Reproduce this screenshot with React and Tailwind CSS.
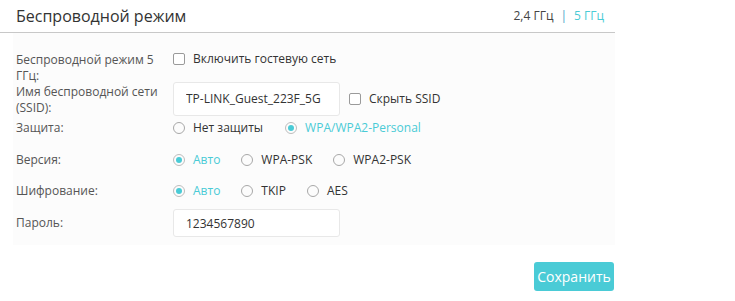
import React from 'react';

const TEAL = 'text-[#4acbd6]';

function Radio({ checked, label }) {
  return (
    <label className="flex items-center">
      <span
        className={
          'flex h-[12px] w-[12px] items-center justify-center rounded-full border ' +
          (checked ? 'border-[#bdbdbd]' : 'border-[#a8a8a8]')
        }
      >
        {checked && <span className="h-[6px] w-[6px] rounded-full bg-[#4acbd6]" />}
      </span>
      <span className={'ml-[8px] ' + (checked ? TEAL : 'text-[#333]')}>{label}</span>
    </label>
  );
}

function Checkbox({ label }) {
  return (
    <label className="flex items-center">
      <span className="h-[12px] w-[12px] rounded-[2px] border border-[#9a9a9a] bg-white" />
      <span className="ml-[8px] text-[#333]">{label}</span>
    </label>
  );
}

function Row({ label, className, labelClass = '', children }) {
  return (
    <div className={'flex ' + className}>
      <div className={'w-[157px] shrink-0 pr-[8px] leading-[16px] text-[#555] ' + labelClass}>{label}</div>
      <div className="flex items-center">{children}</div>
    </div>
  );
}

export default function App() {
  return (
    <div className="h-[301px] w-[735px] bg-white font-['Open_Sans',sans-serif] text-[12px]">
      <div className="w-[615px]">
        {/* Header */}
        <div className="flex h-[33px] items-center justify-between border-b border-[#c8c8c8] pl-[16px] pr-[11px]">
          <h2 className="text-[16px] text-[#333]">Беспроводной режим</h2>
          <div className="flex items-center text-[12px]">
            <span className="text-[#444]">2,4 ГГц</span>
            <span className="mx-[7px] text-[#4aa6c8]">|</span>
            <span className={TEAL}>5 ГГц</span>
          </div>
        </div>

        {/* Form */}
        <div className="ml-[13px] bg-[#fcfcfc] pl-[3px] pt-[19px] pb-[8px]">
          <Row label={<>Беспроводной режим 5<br />ГГц:</>} className="h-[29px]">
            <div className="-mt-[16px]">
              <Checkbox label="Включить гостевую сеть" />
            </div>
          </Row>

          <Row
            label={<>Имя беспроводной сети<br />(SSID):</>}
            labelClass="self-start pt-[3px]"
            className="items-center"
          >
            <input
              readOnly
              value="TP-LINK_Guest_223F_5G"
              className="h-[34px] w-[167px] rounded-[3px] border border-[#e8e8e8] bg-white px-[12px] text-[12px] text-[#333] outline-none"
            />
            <div className="ml-[9px]">
              <Checkbox label="Скрыть SSID" />
            </div>
          </Row>

          <Row label="Защита:" className="mt-[4px] h-[16px] items-center">
            <div className="flex gap-[22px]">
              <Radio label="Нет защиты" />
              <Radio checked label="WPA/WPA2-Personal" />
            </div>
          </Row>

          <Row label="Версия:" className="mt-[16px] h-[16px] items-center">
            <div className="flex gap-[21px]">
              <Radio checked label="Авто" />
              <Radio label="WPA-PSK" />
              <Radio label="WPA2-PSK" />
            </div>
          </Row>

          <Row label="Шифрование:" className="mt-[15px] h-[16px] items-center">
            <div className="flex gap-[21px]">
              <Radio checked label="Авто" />
              <Radio label="TKIP" />
              <Radio label="AES" />
            </div>
          </Row>

          <Row label="Пароль:" className="mt-[10px] items-center">
            <input
              readOnly
              value="1234567890"
              className="h-[28px] w-[167px] rounded-[3px] border border-[#e8e8e8] bg-white px-[12px] text-[12px] text-[#333] outline-none"
            />
          </Row>
        </div>

        <div className="mt-[17px] flex justify-end pr-[1px]">
          <button className="h-[29px] w-[80px] rounded-[3px] bg-[#4acbd6] text-[14px] text-white">
            Сохранить
          </button>
        </div>
      </div>
    </div>
  );
}
